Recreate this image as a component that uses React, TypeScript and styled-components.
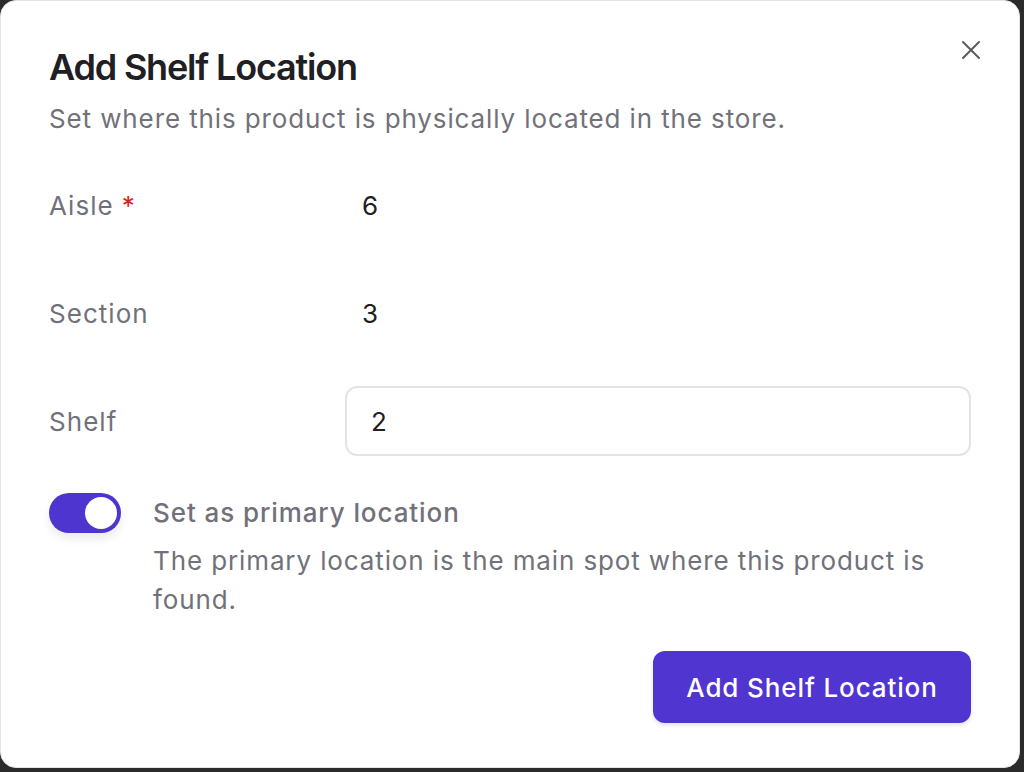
import React, { useState } from "react";
import styled, { createGlobalStyle } from "styled-components";

const Global = createGlobalStyle`
  html, body { margin: 0; padding: 0; background: #2b2b2b; }
  body { font-family: Inter, "Noto Sans", sans-serif; -webkit-font-smoothing: antialiased; }
  * { box-sizing: border-box; }
`;

const Dialog = styled.div`
  position: relative;
  width: 1020px;
  height: 768px;
  background: #ffffff;
  border: 1px solid #e4e4e7;
  border-radius: 16px;
  padding: 44px 48px 0 48px;
  display: flex;
  flex-direction: column;
`;

const Header = styled.div`
  display: flex;
  flex-direction: column;
  gap: 12px;
`;

const Title = styled.h2`
  margin: 0;
  font-size: 36px;
  line-height: 44px;
  font-weight: 600;
  color: #202024;
  letter-spacing: -0.033em;
`;

const Subtitle = styled.p`
  margin: 0;
  font-size: 26px;
  line-height: 36px;
  color: #71717a;
  letter-spacing: 0.034em;
`;

const CloseButton = styled.button`
  position: absolute;
  top: 35px;
  right: 34px;
  width: 28px;
  height: 28px;
  padding: 0;
  border: none;
  background: transparent;
  color: #5a5a60;
  display: flex;
  align-items: center;
  justify-content: center;
  cursor: pointer;
`;

const Form = styled.div`
  display: flex;
  flex-direction: column;
  gap: 38px;
  margin-top: 33px;
`;

const Row = styled.div`
  display: grid;
  grid-template-columns: 296px 1fr;
  align-items: center;
  height: 70px;
`;

const Label = styled.label`
  font-size: 26px;
  color: #71717a;
  letter-spacing: 0.04em;
  display: flex;
  gap: 8px;
  align-items: center;
`;

const Required = styled.span`
  color: #e11d1d;
`;

const Value = styled.div`
  font-size: 26px;
  color: #202024;
  padding-left: 17px;
`;

const Input = styled.input`
  height: 70px;
  width: 100%;
  border: 2px solid #e4e4e7;
  border-radius: 12px;
  padding: 0 24px;
  font-family: inherit;
  font-size: 26px;
  color: #202024;
  outline: none;
  background: #fff;
`;

const SwitchRow = styled.div`
  display: flex;
  gap: 32px;
  margin-top: 37px;
`;

const Track = styled.button<{ $on: boolean }>`
  flex: none;
  width: 72px;
  height: 40px;
  border-radius: 20px;
  border: none;
  padding: 4px;
  background: ${(p) => (p.$on ? "#4f35d0" : "#d4d4d8")};
  display: flex;
  justify-content: ${(p) => (p.$on ? "flex-end" : "flex-start")};
  box-shadow: 0 6px 10px rgba(0, 0, 0, 0.08);
  cursor: pointer;
`;

const Knob = styled.span`
  width: 32px;
  height: 32px;
  border-radius: 50%;
  background: #fff;
`;

const SwitchText = styled.div`
  display: flex;
  flex-direction: column;
  gap: 8px;
`;

const SwitchLabel = styled.div`
  font-size: 26px;
  line-height: 40px;
  color: #71717a;
  font-weight: 500;
  letter-spacing: 0.035em;
`;

const SwitchDesc = styled.div`
  font-size: 26px;
  line-height: 39px;
  color: #71717a;
  letter-spacing: 0.034em;
`;

const Footer = styled.div`
  display: flex;
  justify-content: flex-end;
  margin-top: 32px;
`;

const Primary = styled.button`
  width: 318px;
  height: 72px;
  border: none;
  border-radius: 12px;
  background: #5035d1;
  color: #fff;
  font-family: inherit;
  font-size: 26px;
  font-weight: 500;
  letter-spacing: 0.034em;
  box-shadow: 0 2px 4px rgba(0, 0, 0, 0.12);
  cursor: pointer;
`;

export default function App() {
  const [on, setOn] = useState(true);
  const [shelf, setShelf] = useState("2");
  return (
    <>
      <Global />
      <Dialog>
        <Header>
          <Title>Add Shelf Location</Title>
          <Subtitle>Set where this product is physically located in the store.</Subtitle>
        </Header>
        <CloseButton aria-label="Close">
          <svg width="20" height="20" viewBox="0 0 20 20" fill="none" stroke="currentColor" strokeWidth="2" strokeLinecap="round">
            <path d="M2 2L18 18M18 2L2 18" />
          </svg>
        </CloseButton>
        <Form>
          <Row>
            <Label>
              Aisle <Required>*</Required>
            </Label>
            <Value>6</Value>
          </Row>
          <Row>
            <Label>Section</Label>
            <Value>3</Value>
          </Row>
          <Row>
            <Label>Shelf</Label>
            <Input value={shelf} onChange={(e) => setShelf(e.target.value)} />
          </Row>
        </Form>
        <SwitchRow>
          <Track $on={on} onClick={() => setOn(!on)}>
            <Knob />
          </Track>
          <SwitchText>
            <SwitchLabel>Set as primary location</SwitchLabel>
            <SwitchDesc>The primary location is the main spot where this product is found.</SwitchDesc>
          </SwitchText>
        </SwitchRow>
        <Footer>
          <Primary>Add Shelf Location</Primary>
        </Footer>
      </Dialog>
    </>
  );
}
